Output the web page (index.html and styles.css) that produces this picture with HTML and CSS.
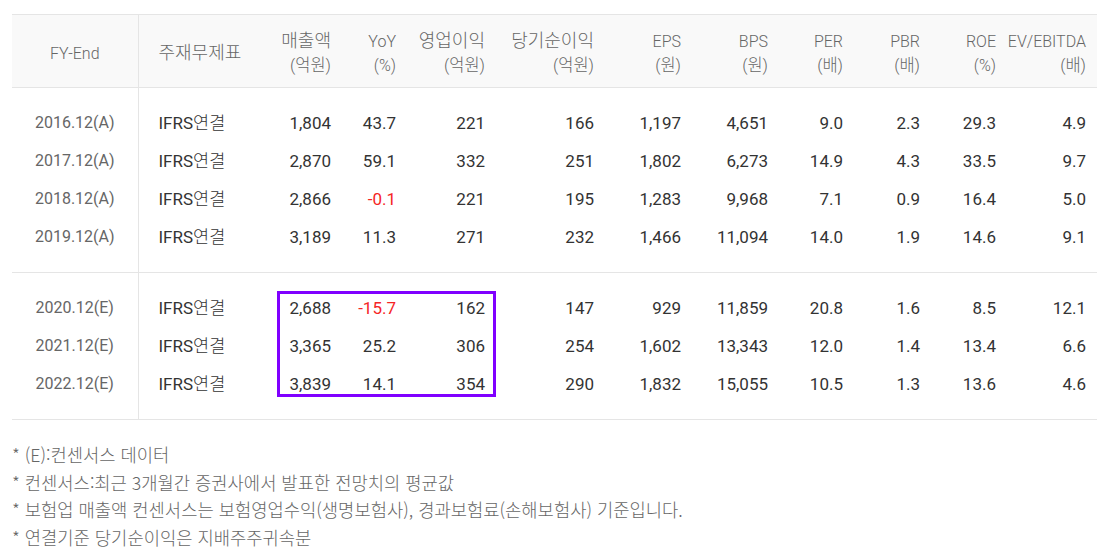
FILE: index.html
```html
<!DOCTYPE html>
<html lang="ko">
<head>
<meta charset="utf-8">
<title>재무 요약</title>
<link rel="stylesheet" href="styles.css">
</head>
<body>
<div class="wrap">
  <table class="fin">
    <colgroup>
      <col class="c-fy"><col class="c-std"><col class="c-rev"><col class="c-yoy"><col class="c-op"><col class="c-net"><col class="c-eps"><col class="c-bps"><col class="c-per"><col class="c-pbr"><col class="c-roe"><col class="c-ev">
    </colgroup>
    <thead>
      <tr>
        <th class="fy">FY-End</th>
        <th class="std"><span class="ko">주재무제표</span></th>
        <th><span class="ko">매출액</span><br><span class="ko-s">(억원)</span></th>
        <th>YoY<br>(%)</th>
        <th><span class="ko">영업이익</span><br><span class="ko-s">(억원)</span></th>
        <th><span class="ko">당기순이익</span><br><span class="ko-s">(억원)</span></th>
        <th>EPS<br><span class="ko-s">(원)</span></th>
        <th>BPS<br><span class="ko-s">(원)</span></th>
        <th>PER<br><span class="ko-s">(배)</span></th>
        <th>PBR<br><span class="ko-s">(배)</span></th>
        <th>ROE<br>(%)</th>
        <th class="last">EV/EBITDA<br><span class="ko-s">(배)</span></th>
      </tr>
    </thead>
    <tbody>
      <tr><td class="fy">2016.12(A)</td><td class="std">IFRS<span class="ko">연결</span></td><td>1,804</td><td>43.7</td><td>221</td><td>166</td><td>1,197</td><td>4,651</td><td>9.0</td><td>2.3</td><td>29.3</td><td class="last">4.9</td></tr>
      <tr><td class="fy">2017.12(A)</td><td class="std">IFRS<span class="ko">연결</span></td><td>2,870</td><td>59.1</td><td>332</td><td>251</td><td>1,802</td><td>6,273</td><td>14.9</td><td>4.3</td><td>33.5</td><td class="last">9.7</td></tr>
      <tr><td class="fy">2018.12(A)</td><td class="std">IFRS<span class="ko">연결</span></td><td>2,866</td><td class="neg">-0.1</td><td>221</td><td>195</td><td>1,283</td><td>9,968</td><td>7.1</td><td>0.9</td><td>16.4</td><td class="last">5.0</td></tr>
      <tr><td class="fy">2019.12(A)</td><td class="std">IFRS<span class="ko">연결</span></td><td>3,189</td><td>11.3</td><td>271</td><td>232</td><td>1,466</td><td>11,094</td><td>14.0</td><td>1.9</td><td>14.6</td><td class="last">9.1</td></tr>
    </tbody>
    <tbody>
      <tr><td class="fy">2020.12(E)</td><td class="std">IFRS<span class="ko">연결</span></td><td>2,688</td><td class="neg">-15.7</td><td>162</td><td>147</td><td>929</td><td>11,859</td><td>20.8</td><td>1.6</td><td>8.5</td><td class="last">12.1</td></tr>
      <tr><td class="fy">2021.12(E)</td><td class="std">IFRS<span class="ko">연결</span></td><td>3,365</td><td>25.2</td><td>306</td><td>254</td><td>1,602</td><td>13,343</td><td>12.0</td><td>1.4</td><td>13.4</td><td class="last">6.6</td></tr>
      <tr><td class="fy">2022.12(E)</td><td class="std">IFRS<span class="ko">연결</span></td><td>3,839</td><td>14.1</td><td>354</td><td>290</td><td>1,832</td><td>15,055</td><td>10.5</td><td>1.3</td><td>13.6</td><td class="last">4.6</td></tr>
    </tbody>
  </table>
  <div class="highlight"></div>
  <ul class="notes">
    <li>* (E):컨센서스 데이터</li>
    <li>* 컨센서스:최근 3개월간 증권사에서 발표한 전망치의 평균값</li>
    <li>* 보험업 매출액 컨센서스는 보험영업수익(생명보험사), 경과보험료(손해보험사) 기준입니다.</li>
    <li>* 연결기준 당기순이익은 지배주주귀속분</li>
  </ul>
</div>
</body>
</html>
```

FILE: styles.css
```css
html, body {
  margin: 0;
  padding: 0;
  background: #fff;
}

body {
  font-family: Roboto, "Noto Sans CJK KR", sans-serif;
  color: #333;
}

.wrap {
  position: relative;
  padding: 14px 0 0 12px;
}

.fin {
  width: 1085px;
  border-collapse: collapse;
  table-layout: fixed;
  border-top: 1px solid #e5e5e5;
}

.c-fy { width: 126px; }
.c-std { width: 112px; }
.c-rev { width: 81px; }
.c-yoy { width: 65px; }
.c-op { width: 89px; }
.c-net { width: 109px; }
.c-eps { width: 87px; }
.c-bps { width: 87px; }
.c-per { width: 75px; }
.c-pbr { width: 77px; }
.c-roe { width: 76px; }
.c-ev { width: 101px; }

.fin th {
  background: #f9f9f9;
  color: #666;
  font-weight: 300;
  font-size: 16px;
  line-height: 24px;
  height: 48px;
  padding: 15px 0 9px;
  text-align: right;
  white-space: nowrap;
  border-bottom: 1px solid #e5e5e5;
}

.fin th .ko {
  font-size: 18px;
  line-height: 1;
}

.fin th .ko-s {
  font-size: 16.5px;
  line-height: 1;
}

.fin td {
  font-size: 17px;
  line-height: 38px;
  padding: 0;
  text-align: right;
  white-space: nowrap;
  color: #333;
}

.fin td .ko {
  font-weight: 300;
  font-size: 17.5px;
  line-height: 1;
}

.fin tbody {
  border-bottom: 1px solid #e5e5e5;
}

.fin tbody tr:first-child td {
  padding-top: 16px;
}

.fin tbody tr:last-child td {
  padding-bottom: 16px;
}

.fin .fy {
  text-align: center;
  border-right: 1px solid #e5e5e5;
  color: #666;
}

.fin td.fy {
  font-size: 16px;
}

.fin th.std {
  text-align: left;
  padding-left: 20px;
}

.fin td.std {
  text-align: left;
  padding-left: 20px;
}

.fin th.last, .fin td.last {
  padding-right: 11px;
}

.fin td.neg {
  color: #f52525;
}

.highlight {
  position: absolute;
  left: 277px;
  top: 291px;
  width: 219px;
  height: 106px;
  box-sizing: border-box;
  border: 3px solid #8000ff;
}

.notes {
  list-style: none;
  margin: 21px 0 0 0;
  padding: 0;
  font-family: "Noto Sans CJK KR", Roboto, sans-serif;
  font-size: 17.7px;
  font-weight: 300;
  line-height: 27.5px;
  color: #666;
}
```
